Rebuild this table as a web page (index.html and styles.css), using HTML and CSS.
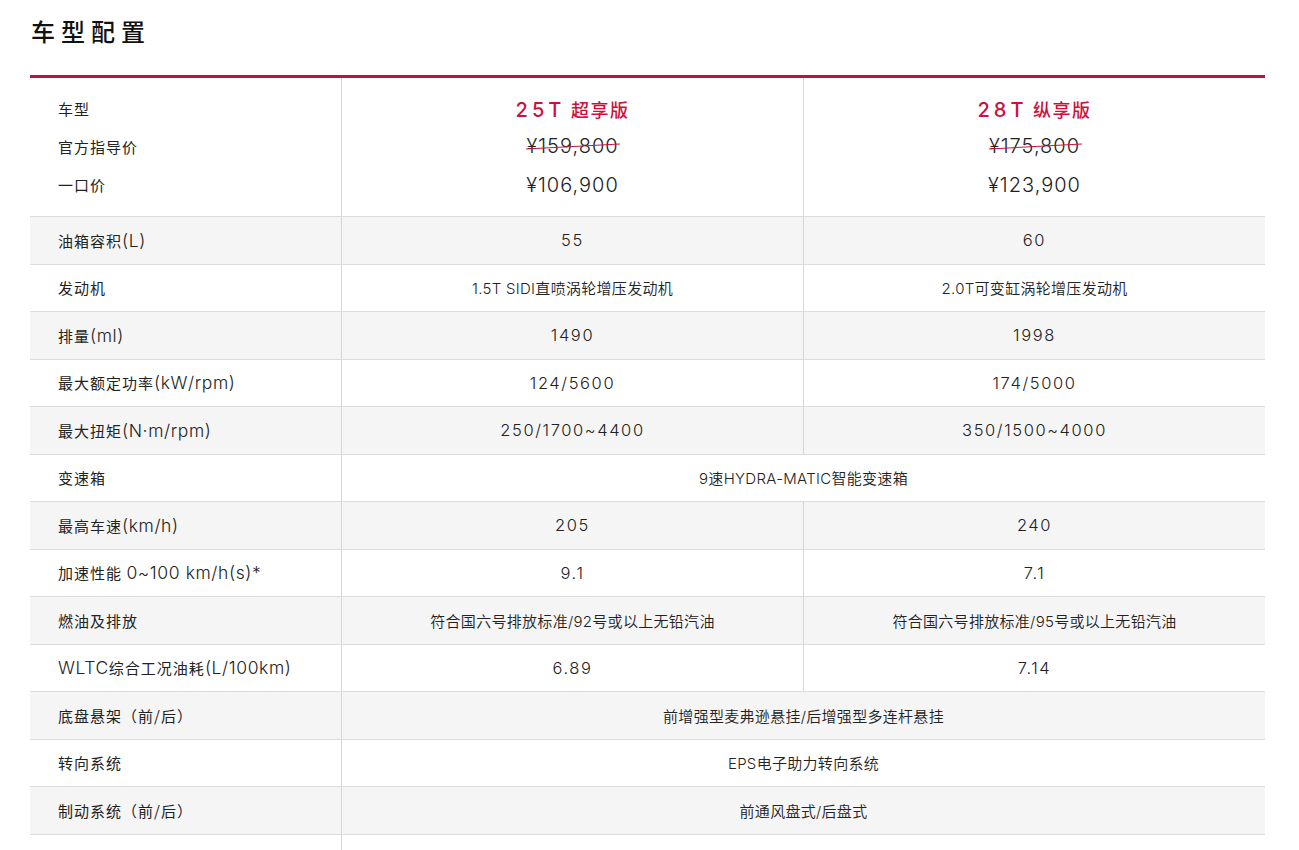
FILE: index.html
```html
<!DOCTYPE html>
<html lang="zh-CN">
<head>
<meta charset="utf-8">
<title>车型配置</title>
<link rel="stylesheet" href="styles.css">
</head>
<body>
<div class="page">
  <h1 class="title">车型配置</h1>
  <div class="spec">
    <div class="row head">
      <div class="label stack"><div>车型</div><div>官方指导价</div><div>一口价</div></div>
      <div class="val stack"><div class="model"><span class="code">25T</span> 超享版</div><div><span class="old">¥159,800</span></div><div class="price">¥106,900</div></div>
      <div class="val stack"><div class="model"><span class="code">28T</span> 纵享版</div><div><span class="old">¥175,800</span></div><div class="price">¥123,900</div></div>
    </div>
    <div class="row alt"><div class="label"><span>油箱容积<span class="en">(L)</span></span></div><div class="val num">55</div><div class="val num">60</div></div>
    <div class="row"><div class="label"><span>发动机</span></div><div class="val cn">1.5T SIDI直喷涡轮增压发动机</div><div class="val cn">2.0T可变缸涡轮增压发动机</div></div>
    <div class="row alt"><div class="label"><span>排量<span class="en">(ml)</span></span></div><div class="val num">1490</div><div class="val num">1998</div></div>
    <div class="row"><div class="label"><span>最大额定功率<span class="en">(kW/rpm)</span></span></div><div class="val num">124/5600</div><div class="val num">174/5000</div></div>
    <div class="row alt"><div class="label"><span>最大扭矩<span class="en">(N·m/rpm)</span></span></div><div class="val num">250/1700~4400</div><div class="val num">350/1500~4000</div></div>
    <div class="row"><div class="label"><span>变速箱</span></div><div class="val span cn">9速HYDRA-MATIC智能变速箱</div></div>
    <div class="row alt"><div class="label"><span>最高车速<span class="en">(km/h)</span></span></div><div class="val num">205</div><div class="val num">240</div></div>
    <div class="row"><div class="label"><span>加速性能 <span class="en">0~100 km/h(s)*</span></span></div><div class="val num">9.1</div><div class="val num">7.1</div></div>
    <div class="row alt"><div class="label"><span>燃油及排放</span></div><div class="val cn">符合国六号排放标准/92号或以上无铅汽油</div><div class="val cn">符合国六号排放标准/95号或以上无铅汽油</div></div>
    <div class="row"><div class="label"><span><span class="en">WLTC</span>综合工况油耗<span class="en">(L/100km)</span></span></div><div class="val num">6.89</div><div class="val num">7.14</div></div>
    <div class="row alt"><div class="label"><span>底盘悬架（前/后）</span></div><div class="val span cn">前增强型麦弗逊悬挂/后增强型多连杆悬挂</div></div>
    <div class="row"><div class="label"><span>转向系统</span></div><div class="val span cn">EPS电子助力转向系统</div></div>
    <div class="row alt"><div class="label"><span>制动系统（前/后）</span></div><div class="val span cn">前通风盘式/后盘式</div></div>
    <div class="row"><div class="label"><span>&nbsp;</span></div><div class="val span cn">&nbsp;</div></div>
  </div>
</div>
</body>
</html>
```

FILE: styles.css
```css
* { box-sizing: border-box; }
html, body { margin: 0; padding: 0; background: #fff; }
body {
  font-family: Inter, "Noto Sans CJK SC", sans-serif;
  color: #222;
  overflow: hidden;
}
.page {
  padding: 15px 0 0 30px;
  width: 1265px;
}
.title {
  margin: 0 0 28px 1px;
  font-family: "Noto Sans CJK SC", sans-serif;
  font-size: 24px;
  line-height: 32px;
  font-weight: 500;
  letter-spacing: 6px;
  color: #111;
}
.spec {
  border-top: 3px solid #b3173f;
  width: 1235px;
}
.row {
  display: grid;
  grid-template-columns: 311px 462px 462px;
  border-bottom: 1px solid #dcdcdc;
  min-height: 47.5px;
}
.row.alt { background: #f5f5f5; }
.label {
  display: flex;
  align-items: center;
  padding-left: 28px;
  font-family: "Noto Sans CJK SC", sans-serif;
  font-size: 15px;
  letter-spacing: 1px;
  color: #222;
}
.label .en {
  font-family: Inter, "Noto Sans CJK SC", sans-serif;
  font-size: 17.5px;
  font-weight: 350;
  letter-spacing: 0.6px;
}
.val {
  display: flex;
  align-items: center;
  justify-content: center;
  border-left: 1px solid #d6d6d6;
  color: #222;
}
.val.span { grid-column: 2 / 4; }
.val.num {
  font-family: Inter, sans-serif;
  font-size: 16.5px;
  font-weight: 350;
  letter-spacing: 1.6px;
}
.val.cn {
  font-family: Inter, "Noto Sans CJK SC", sans-serif;
  font-size: 15px;
  font-weight: 350;
  letter-spacing: 0.3px;
}
.head { min-height: 139px; }
.stack {
  flex-direction: column;
  justify-content: flex-start;
  padding-top: 12px;
}
.label.stack { align-items: flex-start; }
.stack > div {
  height: 38px;
  line-height: 38px;
}
.model {
  color: #d0103a;
  font-family: "Noto Sans CJK SC", sans-serif;
  font-size: 18px;
  font-weight: 500;
  letter-spacing: 1.5px;
}
.model .code {
  font-family: Inter, sans-serif;
  font-size: 20px;
  font-weight: 500;
  letter-spacing: 4px;
}
.old, .price {
  font-family: Inter, sans-serif;
  font-size: 20px;
  font-weight: 350;
  letter-spacing: 1px;
  color: #222;
}
.old {
  position: relative;
  display: inline-block;
  line-height: 24px;
}
.old::after {
  content: "";
  position: absolute;
  left: 0;
  right: -2px;
  top: 12px;
  height: 1px;
  background: #c8163f;
  transform: rotate(-3deg);
}
```
